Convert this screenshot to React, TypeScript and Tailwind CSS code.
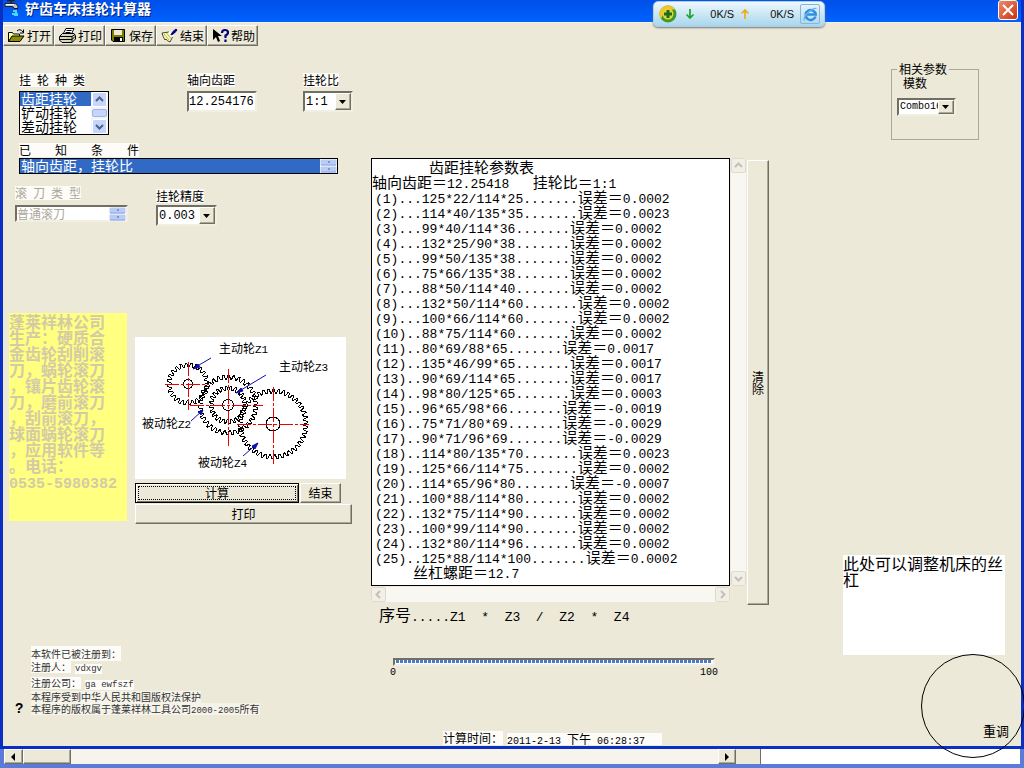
import { ReactNode, useState } from "react";
import clsx from "clsx";

const CJK = "font-['Noto_Sans_CJK_SC',sans-serif]";
const MONO = "font-['Liberation_Mono','Noto_Sans_CJK_SC',monospace]";
const RAISED = "border border-t-white border-l-white border-r-[#716f64] border-b-[#716f64] shadow-[inset_-1px_-1px_0_#aca899]";
const SUNKEN = "border-2 border-t-[#716f64] border-l-[#716f64] border-r-[#f1efe2] border-b-[#f1efe2]";

const results: [string, string][] = [
  ["125*22/114*25", "0.0002"],
  ["114*40/135*35", "0.0023"],
  ["99*40/114*36", "0.0002"],
  ["132*25/90*38", "0.0002"],
  ["99*50/135*38", "0.0002"],
  ["75*66/135*38", "0.0002"],
  ["88*50/114*40", "0.0002"],
  ["132*50/114*60", "0.0002"],
  ["100*66/114*60", "0.0002"],
  ["88*75/114*60", "0.0002"],
  ["80*69/88*65", "0.0017"],
  ["135*46/99*65", "0.0017"],
  ["90*69/114*65", "0.0017"],
  ["98*80/125*65", "0.0003"],
  ["96*65/98*66", "-0.0019"],
  ["75*71/80*69", "-0.0029"],
  ["90*71/96*69", "-0.0029"],
  ["114*80/135*70", "0.0023"],
  ["125*66/114*75", "0.0002"],
  ["114*65/96*80", "-0.0007"],
  ["100*88/114*80", "0.0002"],
  ["132*75/114*90", "0.0002"],
  ["100*99/114*90", "0.0002"],
  ["132*80/114*96", "0.0002"],
  ["125*88/114*100", "0.0002"],
];

const adLines = [
  "蓬莱祥林公司",
  "生产：硬质合",
  "金齿轮刮削滚",
  "刀，蜗轮滚刀",
  "，镶片齿轮滚",
  "刀，磨前滚刀",
  "，刮前滚刀，",
  "球面蜗轮滚刀",
  "，应用软件等",
  "。电话：",
  "0535-5980382",
];

// Half-width runs are set in a smaller mono face so they take half a Chinese character
function Mix({ text, latin }: { text: string; latin: string }) {
  return (
    <span className="whitespace-pre">
      {text.split(/([\x20-\x7e]+)/).map((part, i) =>
        i % 2 ? (
          <span key={i} className={clsx("leading-none", MONO, latin)}>{part}</span>
        ) : (
          part
        )
      )}
    </span>
  );
}

function Label({ text, htmlFor, id, className }: { text: string; htmlFor?: string; id?: string; className?: string }) {
  return (
    <label id={id} htmlFor={htmlFor} className={clsx("block h-[14px] w-fit bg-[#fdfcf8] text-xs leading-[14px]", className)}>
      <Mix text={text} latin="text-[10px]" />
    </label>
  );
}

function ToolButton({ icon, label }: { icon: ReactNode; label: string }) {
  return (
    <button className={clsx("flex h-[21px] w-[51px] items-center gap-[2px] bg-[#ece9d8] pl-1 text-xs", RAISED)}>
      {icon}
      <span className="whitespace-nowrap">{label}</span>
    </button>
  );
}

function Combo({ id, value, width, font }: { id: string; value: string; width: string; font: string }) {
  return (
    <div className={clsx("flex bg-white", SUNKEN, width)}>
      <select id={id} className={clsx("min-w-0 flex-1 appearance-none overflow-hidden bg-white pl-px outline-none", MONO, font)}>
        <option>{value}</option>
      </select>
      <span className={clsx("flex w-4 items-center justify-center bg-[#ece9d8]", RAISED)}>
        <svg width="8" height="4" viewBox="0 0 8 4"><path d="M0 0h7L3.5 4z" fill="#000" /></svg>
      </span>
    </div>
  );
}

function ListChoices({ name, labelledBy, options }: { name: string; labelledBy: string; options: string[] }) {
  const [value, setValue] = useState(options[0]);

  return (
    <div role="radiogroup" aria-labelledby={labelledBy} className="min-w-0 flex-1 bg-white text-sm">
      {options.map((option) => (
        <label key={option} className="block h-[14px] pl-px leading-3 whitespace-nowrap has-checked:bg-[#316ac5] has-checked:text-white">
          <input
            type="radio"
            name={name}
            checked={value === option}
            onChange={() => setValue(option)}
            className="sr-only"
          />
          {option}
        </label>
      ))}
    </div>
  );
}

function ScrollArrow({ dir, disabled }: { dir: "up" | "down" | "left" | "right"; disabled?: boolean }) {
  const paths = { up: "M4 9l3.500-3.500L11 9", down: "M4 6l3.500 3.500L11 6", left: "M9 4L5.500 7.500L9 11", right: "M6 4l3.500 3.500L6 11" };
  return (
    <svg width="15" height="15" viewBox="0 0 15 15" className="shrink-0">
      <rect x="0.5" y="0.5" width="14" height="14" rx="1.500" fill={disabled ? "#f1efe6" : "#c6d5fb"} stroke={disabled ? "#dedbcd" : "#fff"} />
      <path d={paths[dir]} fill="none" stroke={disabled ? "#c3c1b5" : "#4d6185"} strokeWidth="2" />
    </svg>
  );
}

function Spinner() {
  return (
    <svg width="17" height="14" viewBox="0 0 17 14" preserveAspectRatio="none" className="shrink-0">
      <rect width="17" height="14" fill="#fff" />
      <rect x="0.5" y="0.5" width="16" height="6" rx="1" fill="#b9cbf7" />
      <rect x="0.5" y="7.500" width="16" height="6" rx="1" fill="#b9cbf7" />
      <path d="M8 3h2M8 10h2" stroke="#4d6185" />
      <path d="M1 6h15M1 13h15" stroke="#8ca5df" />
    </svg>
  );
}

function gearPath(cx: number, cy: number, r: number, teeth: number, depth: number) {
  const pts: string[] = [];
  for (let i = 0; i < teeth; i++) {
    const a = (i / teeth) * Math.PI * 2;
    const step = (Math.PI * 2) / teeth;
    [[0, r - depth], [0.25, r - depth], [0.5, r], [0.75, r]].forEach(([f, rad]) => {
      const t = a + f * step;
      pts.push(`${(cx + Math.cos(t) * rad).toFixed(2)} ${(cy + Math.sin(t) * rad).toFixed(2)}`);
    });
  }
  return `M${pts.join("L")}Z`;
}

function GearDiagram() {
  return (
    <svg width="211" height="142" viewBox="0 0 211 142" className="bg-white" fontSize="12">
      <g fill="none" stroke="#000" shapeRendering="crispEdges">
        <path d={gearPath(53, 47, 21, 24, 4)} />
        <path d={gearPath(93, 68, 30, 34, 4)} />
        <path d={gearPath(93, 68, 19, 24, 4)} />
        <path d={gearPath(138, 87, 35, 42, 4)} />
        <circle cx="53" cy="47" r="4.500" />
        <circle cx="93" cy="68" r="5.500" />
        <circle cx="138" cy="87" r="7" />
      </g>
      <g stroke="#f00000" strokeDasharray="14 2 3 2">
        <path d="M30 47.500H74" />
        <path d="M53.500 25V73" />
        <path d="M55 68.500H128" />
        <path d="M93.500 32V110" />
        <path d="M102 87.500H174" />
        <path d="M138.500 50V127" />
      </g>
      <g stroke="#1010b0" fill="#1010b0">
        <path d="M76 21L59 31M131 38L101 56M56 84L68 73M108 119L123 106" />
        <path d="M58 32l5-5 2 3zM101 56l5-5 2 3zM68 73l-5 2 3 3zM123 106l-6 3 3 3z" />
      </g>
      <text x="84" y="16">主动轮<tspan className={MONO} fontSize="11">Z1</tspan></text>
      <text x="144" y="34">主动轮<tspan className={MONO} fontSize="11">Z3</tspan></text>
      <text x="7" y="91">被动轮<tspan className={MONO} fontSize="11">Z2</tspan></text>
      <text x="63" y="130">被动轮<tspan className={MONO} fontSize="11">Z4</tspan></text>
    </svg>
  );
}

function TitleBar() {
  return (
    <header className="flex h-[23px] items-start border-b border-[#f4f2e8] bg-linear-to-b from-[#0050ea] via-[#0058f2] to-[#0062ff] pr-[3px] pl-px">
      <svg width="17" height="17" viewBox="0 0 17 17" className="mr-1">
        <path d="M3 .5h8M7 0v4" stroke="#222" strokeWidth="1.500" />
        <path d="M1 3.500h9q4 0 4 5h-4q0-2-2-2H1z" fill="#c8c8c8" stroke="#222" />
        <path d="M2 4.500h8" stroke="#fff" />
        <path d="M10 10v2M12 10v3M9 13v2M11 13v3M13 13v3" stroke="#6ff" strokeWidth="1.500" />
      </svg>
      <h1 className="text-sm leading-4 font-bold text-white [text-shadow:1px_1px_0_#00237a]">铲齿车床挂轮计算器</h1>
      <button aria-label="关闭" className="ml-auto flex size-5 items-center justify-center rounded-[3px] border border-white bg-linear-to-br from-[#f08868] to-[#c8300c]">
        <svg width="12" height="12" viewBox="0 0 12 12"><path d="M1 1l10 10M11 1L1 11" stroke="#fff" strokeWidth="2" /></svg>
      </button>
    </header>
  );
}

function SpeedMeter() {
  return (
    <div className="absolute top-px left-[653px] flex h-[26px] w-[172px] items-center rounded-[5px] border border-[#a9cfe6] bg-linear-to-b from-[#eef8fd] to-[#a9d6ec] pr-1 pl-[5px] font-['Liberation_Sans',sans-serif] text-[11px] text-[#111] shadow-[0_1px_2px_#777]">
      <svg width="18" height="18" viewBox="0 0 18 18">
        <circle cx="9" cy="9" r="8.500" fill="#3c9a2a" />
        <path d="M9 .5A8.500 8.500 0 0 0 2 14Q5 4 16 4.500A8.500 8.500 0 0 0 9 .5z" fill="#f5c22c" />
        <circle cx="9" cy="9" r="5.500" fill="#e6d435" />
        <path d="M9 5v8M5 9h8" stroke="#1c6a1c" strokeWidth="3" />
      </svg>
      <svg width="10" height="10" viewBox="0 0 10 10" className="ml-2">
        <path d="M5 0v9M1.500 5.500L5 9l3.500-3.500" fill="none" stroke="#1da32c" strokeWidth="1.700" />
      </svg>
      <span className="ml-auto">0K/S</span>
      <svg width="10" height="10" viewBox="0 0 10 10" className="ml-[6px]">
        <path d="M5 10V1M1.500 4.500L5 1l3.500 3.500" fill="none" stroke="#efaa1c" strokeWidth="1.700" />
      </svg>
      <span className="ml-5">0K/S</span>
      <span className="ml-[6px] flex size-5 items-center justify-center rounded-[2px] border border-[#85b5dc]">
        <svg width="15" height="15" viewBox="0 0 15 15">
          <path d="M12.500 9.500A5 5 0 1 1 12.700 7.500H4" fill="none" stroke="#2f8ee0" strokeWidth="2.500" />
          <path d="M1.500 13.500C-.5 10 8 1 13.500 1.500" fill="none" stroke="#63b4f2" strokeWidth="1.300" />
        </svg>
      </span>
    </div>
  );
}

function Toolbar() {
  return (
    <nav className="flex pt-[2px]">
      <ToolButton label="打开" icon={
        <svg width="17" height="15" viewBox="0 0 17 15" className="shrink-0">
          <path d="M.5 13.500v-9h4l1 1.500h6v2" fill="#ffff9c" stroke="#000" />
          <path d="M.5 13.500L4 8h12l-4 5.500z" fill="#8c8c00" stroke="#000" />
          <path d="M9 3q3-3 6 1M15.500 1.500V5H12" fill="none" stroke="#000" />
        </svg>
      } />
      <ToolButton label="打印" icon={
        <svg width="17" height="15" viewBox="0 0 17 15" className="shrink-0">
          <path d="M4 6l3-5.500h8L12.500 6" fill="#fff" stroke="#000" />
          <path d="M7.500 2.500h5M6.500 4.500h5" stroke="#000" />
          <path d="M.5 8.500L3.500 5.500H15l1.500 2V11L13 14.500H3L.5 12z" fill="#d8d5c4" stroke="#000" />
          <path d="M1 8.500h12l3-2M13 8.500v6M1 11.500h12l3-3" fill="none" stroke="#000" />
          <path d="M8 10h3" stroke="#cc0" />
        </svg>
      } />
      <ToolButton label="保存" icon={
        <svg width="17" height="15" viewBox="0 0 17 15" className="shrink-0">
          <path d="M1.500 1.500h13v12H3l-1.500-1.500z" fill="#7b7b00" stroke="#000" />
          <path d="M4 2h8v5H4z" fill="#ece9d8" />
          <path d="M4 9h9v5H4z" fill="#000" />
          <path d="M10 10h2v3h-2z" fill="#fff" />
        </svg>
      } />
      <ToolButton label="结束" icon={
        <svg width="17" height="15" viewBox="0 0 17 15" className="shrink-0">
          <path d="M1 5l7-1 4 4-3 6q-3-1-4-3l-1 1Q2 9 1 5z" fill="#ffff9c" stroke="#444" />
          <path d="M3 6l5 6M5.500 5l5 6" stroke="#888" strokeWidth=".7" />
          <path d="M8 4l4.500 4.500" stroke="#fff" strokeWidth="2" />
          <path d="M10 6.500l2-3 3-2.500 1 1-2.500 3-3 2z" fill="#00007b" stroke="#00007b" />
        </svg>
      } />
      <ToolButton label="帮助" icon={
        <svg width="17" height="15" viewBox="0 0 17 15" className="shrink-0">
          <path d="M1 1v11l3-3 2 5 2-1-2-5h4z" fill="#000" />
          <path d="M10 5q0-3 3-3t3 2.500q0 2-2.500 3V10M13.500 11.500V14" fill="none" stroke="#00007b" strokeWidth="2.200" />
        </svg>
      } />
    </nav>
  );
}

function Inputs() {
  const [pitch, setPitch] = useState("12.254176");

  return (
    <>
      <div className="flex pl-4">
        <div className="w-[168px]">
          <Label text="挂 轮 种 类" id="kind" className="mb-1" />
          <div className="flex h-[44px] w-[90px] border border-black bg-white">
            <ListChoices name="kind" labelledBy="kind" options={["齿距挂轮", "铲动挂轮", "差动挂轮"]} />
            <div className="flex w-[17px] flex-col items-center justify-between bg-[#f3f3fb]">
              <ScrollArrow dir="up" />
              <span className="h-2 w-[15px] rounded-[2px] border border-[#9db4ec] bg-[#c6d5fb]" />
              <ScrollArrow dir="down" />
            </div>
          </div>
        </div>
        <div className="w-[116px]">
          <Label text="轴向齿距" htmlFor="pitch" className="mb-1" />
          <input
            id="pitch"
            value={pitch}
            onChange={(e) => setPitch(e.target.value)}
            className={clsx("block h-[21px] w-[70px] bg-white text-xs outline-none", MONO, SUNKEN)}
          />
        </div>
        <div>
          <Label text="挂轮比" htmlFor="ratio" className="mb-1" />
          <Combo id="ratio" value="1:1" width="h-[21px] w-[50px]" font="text-xs" />
        </div>
      </div>

      <div className="mt-2 pl-4">
        <Label text="已    知    条    件" id="known" className="mb-px" />
        <div className="flex h-4 w-[319px] border border-black bg-[#316ac5]">
          <ListChoices name="known" labelledBy="known" options={["轴向齿距，挂轮比"]} />
          <Spinner />
        </div>
      </div>

      <div className="mt-3 flex pl-3">
        <div className="w-[141px] text-[#aca899]">
          <Label text="滚 刀 类 型" htmlFor="hob" className="mb-[5px]" />
          <div className={clsx("flex h-[17px] w-[113px] bg-white", SUNKEN)}>
            <select id="hob" disabled className="min-w-0 flex-1 appearance-none bg-white text-xs leading-[13px] opacity-100 outline-none">
              <option>普通滚刀</option>
            </select>
            <Spinner />
          </div>
        </div>
        <div className="pt-[3px]">
          <Label text="挂轮精度" htmlFor="accuracy" className="mb-[2px]" />
          <Combo id="accuracy" value="0.003" width="h-[21px] w-[61px]" font="text-xs" />
        </div>
      </div>
    </>
  );
}

function LeftColumn() {
  return (
    <section className="flex w-[368px] shrink-0 flex-col pt-[27px]">
      <Inputs />
      <div className="mt-[87px] flex gap-2 pl-[6px]">
        <div className="h-[208px] w-[118px] bg-[#ffff80] text-base leading-4 font-bold text-[#d3cba6]">
          {adLines.map((line) => (
            <p key={line} className="h-4"><Mix text={line} latin="text-[15px]" /></p>
          ))}
        </div>
        <div className="pt-6 text-xs">
          <GearDiagram />
          <div className="mt-1 mb-px flex gap-px">
            <button className="h-5 w-[164px] border border-black bg-[#ece9d8] p-[2px] shadow-[inset_1px_1px_0_#fff,inset_-1px_-1px_0_#716f64]">
              <span className="block border border-dotted border-black leading-3">计算</span>
            </button>
            <button className={clsx("h-5 w-[41px] bg-[#ece9d8]", RAISED)}>结束</button>
          </div>
          <button className={clsx("h-5 w-[217px] bg-[#ece9d8]", RAISED)}>打印</button>
        </div>
      </div>
      <footer className="mt-[124px] flex items-end pl-3 text-[10px] leading-3 text-[#333]">
        <span className={clsx("w-4 text-sm leading-3 font-bold text-black", MONO)}>?</span>
        <div>
          <p className="mb-px h-3"><span className="bg-[#fdfcf8]">本软件已被注册到：</span></p>
          <p className="mb-1 flex h-3 gap-1"><span className="bg-[#fdfcf8]">注册人：</span><Mix text="vdxgv" latin="text-[9px] bg-[#fdfcf8]" /></p>
          <p className="mb-[2px] flex h-3 gap-1"><span className="bg-[#fdfcf8]">注册公司：</span><Mix text="ga ewfszf" latin="text-[9px] bg-[#fdfcf8]" /></p>
          <p className="h-3 w-fit bg-[#f6f4ea]">本程序受到中华人民共和国版权法保护</p>
          <p className="h-3 w-fit bg-[#f6f4ea]"><Mix text="本程序的版权属于蓬莱祥林工具公司2000-2005所有" latin="text-[9px]" /></p>
        </div>
      </footer>
    </section>
  );
}

function ResultsColumn() {
  return (
    <section className="flex w-[399px] shrink-0 flex-col pt-[112px]">
      <div className="flex gap-px">
        <div className="w-[359px]">
          <div className="h-[428px] border border-black bg-white text-[15px] leading-[15px]">
            <p className="h-[15px] pl-[57px]">齿距挂轮参数表</p>
            <p className="h-[15px]"><Mix text="轴向齿距＝12.25418   挂轮比＝1:1" latin="text-[13px]" /></p>
            <ol className="pl-[3px]">
              {results.map(([gears, error], i) => (
                <li key={i} className="h-[15px]">
                  <Mix text={`${`(${i + 1})`.padEnd(6, ".")}${gears}.......误差＝${error}`} latin="text-[13px]" />
                </li>
              ))}
            </ol>
            <p className="h-[15px] pl-[41px]"><Mix text="丝杠螺距＝12.7" latin="text-[13px]" /></p>
          </div>
          <div className="mt-px flex justify-between bg-[#f8f7f2]">
            <ScrollArrow dir="left" disabled />
            <ScrollArrow dir="right" disabled />
          </div>
        </div>
        <div className="flex h-[428px] w-[15px] flex-col justify-between bg-[#f8f7f2]">
          <ScrollArrow dir="up" disabled />
          <ScrollArrow dir="down" disabled />
        </div>
        <button className={clsx("mt-[2px] h-[445px] w-[22px] bg-[#ece9d8] px-1 text-xs leading-3", RAISED)}>清除</button>
      </div>
      <p className="mt-px mb-px h-4 pl-2 text-base leading-4"><Mix text="序号.....Z1  *  Z3  /  Z2  *  Z4" latin="text-[13px]" /></p>
      <div className="mt-[35px] ml-[19px] w-[328px]">
        <div className="px-[3px]">
          <div role="progressbar" aria-label="进度" aria-valuenow={100} className={clsx("h-2 bg-white px-px", SUNKEN)}>
            <div className="h-[3px] bg-[repeating-linear-gradient(90deg,#4a7bc8_0_3px,#fff_3px_4px)]" />
          </div>
        </div>
        <div className={clsx("flex justify-between text-[10px] leading-[14px]", MONO)}>
          <span>0</span>
          <span>100</span>
        </div>
      </div>
      <div className="mt-auto flex items-end gap-1 pb-px pl-[72px] text-xs leading-[14px]">
        <span className="bg-[#fdfcf8]">计算时间：</span>
        <span className="h-3 w-[155px] bg-[#fdfcf8] leading-3"><Mix text="2011-2-13 下午 06:28:37" latin="text-[10px]" /></span>
      </div>
    </section>
  );
}

function RightColumn() {
  return (
    <section className="relative ml-auto flex w-[178px] flex-col pt-4">
      <fieldset className="ml-12 h-[78px] w-[88px] border border-[#aca899] px-[5px] text-xs leading-[14px]">
        <legend className="px-[2px]">相关参数</legend>
        <label htmlFor="module" className="block pl-[6px]">模数</label>
        <div className="mt-2"><Combo id="module" value="Combo16" width="h-[18px] w-[59px]" font="text-[10px]" /></div>
      </fieldset>
      <textarea
        aria-label="丝杠"
        defaultValue="此处可以调整机床的丝杠"
        className="mt-[415px] h-[100px] w-[162px] resize-none bg-white text-base leading-4 outline-none"
      />
      {/* retune dial, drawn over the window frame */}
      <svg width="104" height="104" viewBox="0 0 104 104" className="absolute -right-1 -bottom-3 z-10">
        <circle cx="52" cy="52" r="51.500" fill="none" stroke="#000" />
      </svg>
      <button className="mt-auto mr-3 mb-2 self-end text-[13px] leading-[14px]">重调</button>
    </section>
  );
}

export default function App() {
  return (
    <div className={clsx("relative flex min-h-screen flex-col overflow-hidden bg-[#3a6cd8] text-black", CJK)}>
      <div className="flex flex-1 flex-col border-x-[3px] border-b-[3px] border-[#0a2fc4] bg-[#ece9d8]">
        <TitleBar />
        <Toolbar />
        <main className="flex flex-1">
          <LeftColumn />
          <ResultsColumn />
          <RightColumn />
        </main>
      </div>
      <SpeedMeter />
      <div className="flex h-[19px] border-x-4 border-b-4 border-[#5a7cd8] bg-[#ece9d8]">
        <button aria-label="向左" className={clsx("flex w-[19px] items-center justify-center", RAISED)}>
          <svg width="5" height="8" viewBox="0 0 5 8"><path d="M4 0v8L0 4z" /></svg>
        </button>
        <span className={clsx("w-12", RAISED)} />
        <span className="w-[647px] bg-[#f6f4ec]" />
        <button aria-label="向右" className={clsx("flex w-[18px] items-center justify-center", RAISED)}>
          <svg width="5" height="8" viewBox="0 0 5 8"><path d="M0 0v8l4-4z" /></svg>
        </button>
        <span className="ml-6 flex-1 border-l border-[#716f64] bg-white" />
      </div>
    </div>
  );
}
